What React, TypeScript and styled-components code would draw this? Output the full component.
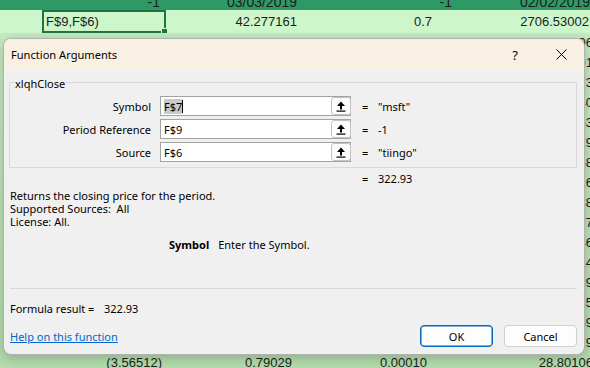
import React from 'react';
import styled, { createGlobalStyle } from 'styled-components';

const Global = createGlobalStyle`
  html, body { margin: 0; padding: 0; }
  body { width: 590px; height: 368px; overflow: hidden; background: #bfe4b9; }
`;

const Screen = styled.div`
  position: relative;
  width: 590px;
  height: 368px;
  overflow: hidden;
  background: linear-gradient(180deg, #c8ecc3 0%, #b3dbac 100%);
`;

/* ---------- spreadsheet behind the dialog ---------- */

const Sheet = styled.div`
  display: flex;
  flex-direction: column;
  font-family: "Liberation Sans", Arial, sans-serif;
  font-size: 13px;
  color: #1c1c1c;
`;

const Row = styled.div<{ $h: number; $bg?: string; $clipTop?: boolean; $fs?: number }>`
  display: flex;
  height: ${(p) => p.$h}px;
  background: ${(p) => p.$bg ?? 'transparent'};
  align-items: ${(p) => (p.$clipTop ? 'flex-end' : 'center')};
  font-size: ${(p) => p.$fs ?? 13}px;
  overflow: hidden;
`;

const Cell = styled.div<{ $w: number; $pad?: number; $left?: boolean }>`
  flex: 0 0 ${(p) => p.$w}px;
  box-sizing: border-box;
  text-align: ${(p) => (p.$left ? 'left' : 'right')};
  padding: 0 ${(p) => p.$pad ?? 4}px;
  white-space: nowrap;
  line-height: 16px;
  overflow: hidden;
`;

const ActiveCell = styled.div`
  position: relative;
  flex: 0 0 124px;
  align-self: stretch;
  box-sizing: border-box;
  border: 2px solid #217346;
  padding: 0 2px;
  display: flex;
  align-items: center;
  white-space: nowrap;
  &::after {
    content: '';
    position: absolute;
    right: -4px;
    bottom: -4px;
    width: 5px;
    height: 5px;
    background: #217346;
    border: 1px solid #cdf6cb;
  }
`;

/* ---------- dialog ---------- */

const Dialog = styled.div`
  position: absolute;
  left: 3px;
  top: 38px;
  width: 582px;
  height: 317px;
  box-sizing: border-box;
  border: 1px solid #aeb4ae;
  border-radius: 8px;
  background: #f0f0f0;
  overflow: hidden;
  box-shadow: 0 3px 12px rgba(0, 0, 0, 0.22);
  display: flex;
  flex-direction: column;
  font-family: "Noto Sans", "Open Sans", sans-serif;
  font-size: 11px;
  color: #000;
`;

const TitleBar = styled.div`
  flex: 0 0 31px;
  display: flex;
  align-items: center;
  background: #f8f1e3;
  padding-left: 7px;
`;

const TitleText = styled.div`
  flex: 1;
  font-size: 11.1px;
`;

const TitleButton = styled.div`
  width: 46px;
  height: 31px;
  display: flex;
  align-items: center;
  justify-content: center;
  font-size: 13px;
`;

const Body = styled.div`
  flex: 1;
  display: flex;
  flex-direction: column;
  padding: 12px 7px 0 5px;
`;

const Group = styled.div`
  position: relative;
  border: 1px solid #d9d9d9;
  padding: 13px 0 5px 0;
  display: grid;
  grid-template-columns: 150px 191px 27px 1fr;
  row-gap: 3px;
  align-items: center;
`;

const Legend = styled.div`
  position: absolute;
  top: -6px;
  left: 4px;
  padding: 0 1px;
  background: #f0f0f0;
  line-height: 14px;
`;

const ArgLabel = styled.div`
  text-align: right;
  padding-right: 9px;
`;

const Field = styled.div`
  height: 20px;
  box-sizing: border-box;
  border: 1px solid #a3a3a3;
  background: #fff;
  display: flex;
  align-items: center;
`;

const FieldText = styled.div`
  flex: 1;
  padding-left: 3px;
  display: flex;
  align-items: center;
`;

const Selected = styled.span`
  background: #c9c9c9;
`;

const Caret = styled.span`
  display: inline-block;
  width: 1px;
  height: 13px;
  background: #000;
`;

const RefButton = styled.div`
  width: 20px;
  height: 18px;
  box-sizing: border-box;
  margin-right: -1px;
  border: 1px solid #c3c3c3;
  border-radius: 3px;
  background: #fcfcfc;
  display: flex;
  align-items: center;
  justify-content: center;
`;

const Eq = styled.div`
  padding-left: 11px;
`;

const ResultRow = styled.div`
  display: flex;
  margin-top: 5px;
  padding-left: 353px;
  line-height: 12px;
`;

const EqSign = styled.span`
  display: inline-block;
  width: 16px;
`;

const Description = styled.div`
  margin-top: 4px;
  line-height: 13px;
  padding-left: 1px;
`;

const ArgHelp = styled.div`
  margin-top: 10px;
  line-height: 13px;
  padding-left: 160px;
  display: flex;
  gap: 9px;
`;

const Bold = styled.span`
  font-weight: 700;
`;

const Separator = styled.div`
  margin-top: 37px;
  height: 1px;
  background: #d9d9d9;
  margin-left: 1px;
`;

const FormulaRow = styled.div`
  margin-top: 13px;
  line-height: 13px;
  padding-left: 1px;
  display: flex;
`;

const FormulaLabel = styled.span`
  display: inline-block;
  width: 94px;
`;

const Footer = styled.div`
  margin-top: 10px;
  display: flex;
  align-items: center;
  padding-left: 1px;
  gap: 11px;
`;

const HelpLink = styled.a`
  flex: 1;
  color: #0066cc;
  text-decoration: underline;
  cursor: pointer;
`;

const Button = styled.button<{ $primary?: boolean }>`
  width: 73px;
  height: 22px;
  box-sizing: border-box;
  border-radius: 4px;
  background: #fdfdfd;
  border: 1px solid ${(p) => (p.$primary ? '#0067c0' : '#d0d0d0')};
  box-shadow: ${(p) => (p.$primary ? 'inset 0 0 0 0.5px #0067c0' : 'none')};
  font-family: inherit;
  font-size: 11px;
  color: #000;
  padding: 0;
`;

const RefIcon = () => (
  <svg width="10" height="11" viewBox="0 0 10 11">
    <path d="M5 0.5 L9 5 L6 5 L6 8.5 L4 8.5 L4 5 L1 5 Z" fill="#000" />
    <rect x="0.5" y="9.5" width="9" height="1.2" fill="#000" />
  </svg>
);

const CloseIcon = () => (
  <svg width="11" height="11" viewBox="0 0 11 11">
    <path d="M0.5 0.5 L10.5 10.5 M10.5 0.5 L0.5 10.5" stroke="#000" strokeWidth="1" />
  </svg>
);

const W = [42, 123, 135, 136, 161];

/* rows hidden behind the dialog: only the last column's tail shows at the right edge */
const hiddenTails = [
  '2712.11301', '2689.04573', '2701.67440', '2722.91053', '2740.33019',
  '2731.20958', '2719.48816', '2702.77038', '2710.15277', '2729.50046',
  '2720.66414', '2725.01389', '2744.88035', '2739.24459', '2751.90019',
];

export default function App() {
  return (
    <Screen>
      <Global />
      <Sheet>
        <Row $h={10} $bg="#2f9966" $clipTop $fs={14}>
          <Cell $w={42} />
          <Cell $w={123} $pad={5}>-1</Cell>
          <Cell $w={135} $pad={3}>03/03/2019</Cell>
          <Cell $w={157} $pad={5}>-1</Cell>
          <Cell $w={140} $pad={0} $left style={{ paddingLeft: 63 }}>02/02/2019</Cell>
        </Row>
        <Row $h={23} $bg="#cdf6cb">
          <Cell $w={42} />
          <ActiveCell>F$9,F$6)</ActiveCell>
          <Cell $w={134} $pad={3}>42.277161</Cell>
          <Cell $w={136} $pad={4}>0.7</Cell>
          <Cell $w={161} $pad={8}>2706.53002</Cell>
        </Row>
        <Row $h={20}>
          <Cell $w={W[0]} />
          <Cell $w={W[1]} $pad={3}>600.012</Cell>
          <Cell $w={W[2]} $pad={4}>43.184631</Cell>
          <Cell $w={W[3]} $pad={4}>0.79</Cell>
          <Cell $w={W[4]} $pad={4}>2738.80006</Cell>
        </Row>
        {hiddenTails.map((v, i) => (
          <Row key={i} $h={20}>
            <Cell $w={W[0]} />
            <Cell $w={W[1]} />
            <Cell $w={W[2]} />
            <Cell $w={W[3]} />
            <Cell $w={W[4]} $pad={4}>{v}</Cell>
          </Row>
        ))}
        <Row $h={20}>
          <Cell $w={W[0]} />
          <Cell $w={W[1]} $pad={3}>(3.56512)</Cell>
          <Cell $w={W[2]} $pad={8}>0.79029</Cell>
          <Cell $w={W[3]} $pad={9}>0.00010</Cell>
          <Cell $w={W[4]} $pad={4}>28.80106</Cell>
        </Row>
      </Sheet>

      <Dialog>
        <TitleBar>
          <TitleText>Function Arguments</TitleText>
          <TitleButton>?</TitleButton>
          <TitleButton>
            <CloseIcon />
          </TitleButton>
        </TitleBar>
        <Body>
          <Group>
            <Legend>xlqhClose</Legend>

            <ArgLabel>Symbol</ArgLabel>
            <Field>
              <FieldText>
                <Selected>F$7</Selected>
                <Caret />
              </FieldText>
              <RefButton><RefIcon /></RefButton>
            </Field>
            <Eq>=</Eq>
            <div>"msft"</div>

            <ArgLabel>Period Reference</ArgLabel>
            <Field>
              <FieldText>F$9</FieldText>
              <RefButton><RefIcon /></RefButton>
            </Field>
            <Eq>=</Eq>
            <div>-1</div>

            <ArgLabel>Source</ArgLabel>
            <Field>
              <FieldText>F$6</FieldText>
              <RefButton><RefIcon /></RefButton>
            </Field>
            <Eq>=</Eq>
            <div>"tiingo"</div>
          </Group>

          <ResultRow>
            <EqSign>=</EqSign>
            <span>322.93</span>
          </ResultRow>

          <Description>
            <div>Returns the closing price for the period.</div>
            <div>Supported Sources:&nbsp; All</div>
            <div>License: All.</div>
          </Description>

          <ArgHelp>
            <Bold>Symbol</Bold>
            <span>Enter the Symbol.</span>
          </ArgHelp>

          <Separator />

          <FormulaRow>
            <FormulaLabel>Formula result =</FormulaLabel>
            <span>322.93</span>
          </FormulaRow>

          <Footer>
            <HelpLink>Help on this function</HelpLink>
            <Button $primary>OK</Button>
            <Button>Cancel</Button>
          </Footer>
        </Body>
      </Dialog>
    </Screen>
  );
}
